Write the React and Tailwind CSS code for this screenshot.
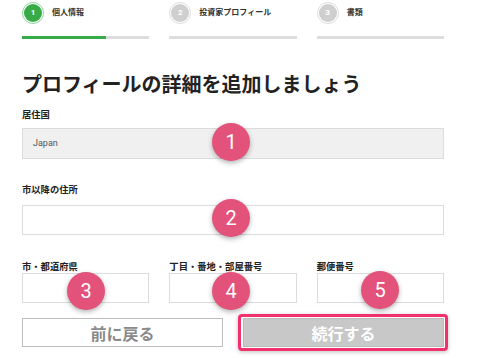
import React from "react";

const STEPS = [
  { n: 1, label: "個人情報", active: true },
  { n: 2, label: "投資家プロフィール" },
  { n: 3, label: "書類" },
];

// numbered callouts laid over the form
const BADGES = [
  { n: 1, cls: "left-[212px] top-[123px]" },
  { n: 2, cls: "left-[212px] top-[199px]" },
  { n: 3, cls: "left-[67px] top-[272px]" },
  { n: 4, cls: "left-[212px] top-[272px]" },
  { n: 5, cls: "left-[361px] top-[271px]" },
];

function StepHead({ step }) {
  return (
    <div>
      <div className="flex items-center gap-[8px] h-[22px] mt-[2px]">
        <div
          className={`w-[22px] h-[22px] rounded-full border p-[1px] bg-white ${
            step.active ? "border-[#8fd49a]" : "border-[#dedede]"
          }`}
        >
          <div
            className={`w-full h-full rounded-full flex items-center justify-center text-white text-[8px] font-bold ${
              step.active ? "bg-[#37ab46]" : "bg-[#cfcfcf]"
            }`}
          >
            {step.n}
          </div>
        </div>
        <span className="text-[8px] font-bold text-[#333]">{step.label}</span>
      </div>
      <div className="mt-[12px] h-[3px] bg-[#dddddd]">
        {step.active && <div className="h-full w-[66%] bg-[#37ab46]" />}
      </div>
    </div>
  );
}

function Field({ label, className = "", children }) {
  return (
    <div className={className}>
      <div className="text-[9.3px] leading-[12px] font-bold text-[#222]">{label}</div>
      {children}
    </div>
  );
}

export default function App() {
  return (
    <div className="relative w-[500px] h-[358px] bg-white overflow-hidden font-['Roboto','Noto_Sans_CJK_JP',sans-serif]">
      <div className="pl-[22px] w-[444px]">
        {/* Steps */}
        <div className="grid grid-cols-3 gap-[20px]">
          {STEPS.map((s) => (
            <StepHead key={s.n} step={s} />
          ))}
        </div>

        <h1 className="mt-[31px] text-[20px] leading-[28px] font-bold text-[#222] font-['Noto_Sans_CJK_JP',sans-serif]">
          プロフィールの詳細を追加しましょう
        </h1>

        <Field label="居住国" className="mt-[11px]">
          <div className="mt-[7px] h-[31px] bg-[#f0f0f0] border border-[#dcdcdc] flex items-center pl-[10px] text-[9px] text-[#555]">
            Japan
          </div>
        </Field>

        <Field label="市以降の住所" className="mt-[25px]">
          <div className="mt-[9px] h-[30px] border border-[#dcdcdc] bg-white" />
        </Field>

        <div className="mt-[26px] grid grid-cols-3 gap-[20px]">
          {["市・都道府県", "丁目・番地・部屋番号", "郵便番号"].map((l) => (
            <Field key={l} label={l}>
              <div className="h-[30px] border border-[#dcdcdc] bg-white" />
            </Field>
          ))}
        </div>

        {/* Buttons */}
        <div className="mt-[15px] grid grid-cols-2 gap-[20px]">
          <button className="h-[29px] border border-[#bdbdbd] bg-white text-[16px] font-bold text-[#8a8a8a] font-['Noto_Sans_CJK_JP',sans-serif]">
            前に戻る
          </button>
          <div className="relative">
            <div className="absolute -inset-[4px] -left-[5px] rounded-[4px] border-[3px] border-[#f2316c] shadow-[0_1px_4px_rgba(0,0,0,0.25)]" />
            <button className="relative w-full h-[29px] bg-[#c8c8c8] border border-[#bbbbbb] text-[16px] font-bold text-white font-['Noto_Sans_CJK_JP',sans-serif]">
              続行する
            </button>
          </div>
        </div>
      </div>

      {BADGES.map((b) => (
        <div
          key={b.n}
          className={`absolute ${b.cls} w-[38px] h-[38px] rounded-full bg-[#e2527a] shadow-[0_2px_5px_rgba(0,0,0,0.3)] flex items-center justify-center text-white text-[20px] font-['Roboto',sans-serif]`}
        >
          {b.n}
        </div>
      ))}
    </div>
  );
}
